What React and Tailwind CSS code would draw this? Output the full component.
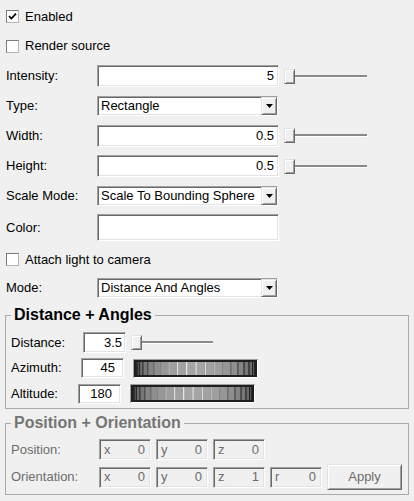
import React from 'react';

const sunken =
  'border border-t-[#a0a0a0] border-l-[#a0a0a0] border-r-white border-b-white shadow-[inset_1px_1px_0_#696969,inset_-1px_-1px_0_#e3e3e3]';
const raised =
  'border border-t-[#e3e3e3] border-l-[#e3e3e3] border-r-[#696969] border-b-[#696969] shadow-[inset_1px_1px_0_#ffffff,inset_-1px_-1px_0_#a0a0a0]';

const CheckBox = ({ checked }) => (
  <div className="w-[13px] h-[13px] border border-t-[#7a7a7a] border-l-[#7a7a7a] border-r-[#b5b5b5] border-b-[#b5b5b5] bg-white flex items-center justify-center shrink-0">
    {checked && (
      <svg width="9" height="9" viewBox="0 0 9 9">
        <path d="M1 4.2 L3.4 6.6 L8 1.6" stroke="#000" strokeWidth="1.7" fill="none" />
      </svg>
    )}
  </div>
);

const Slider = ({ line }) => (
  <div className="flex items-center">
    <div className={`w-[11px] h-[15px] bg-[#f0f0f0] ${raised}`} />
    <div className={`h-[3px] border-t-2 border-t-[#8a8a8a] border-b border-b-white ${line}`} />
  </div>
);

const Combo = ({ text }) => (
  <div className={`w-[181px] h-[20px] bg-white flex items-stretch ${sunken}`}>
    <span className="flex-1 pl-[3px] leading-[18px] whitespace-nowrap overflow-hidden">{text}</span>
    <div className={`w-[16px] bg-[#f0f0f0] flex items-center justify-center ${raised}`}>
      <svg width="7" height="4" viewBox="0 0 7 4">
        <polygon points="0,0 7,0 3.5,4" fill="#000" />
      </svg>
    </div>
  </div>
);

const Dial = () => {
  const W = 125;
  const H = 19;
  const n = 20;
  const xs = [];
  for (let i = 0; i <= n; i++) xs.push(3 + ((W - 6) * (1 - Math.cos((Math.PI * i) / n))) / 2);
  const g = (v) => {
    const c = Math.round(Math.max(0, Math.min(255, v)));
    return `rgb(${c},${c},${c})`;
  };
  return (
    <svg width={W} height={H} className="block shrink-0">
      <rect x="0" y="0" width={W} height={H} fill="#a0a0a0" />
      <rect x="1" y="1" width={W - 1} height={H - 1} fill="#ffffff" />
      <rect x="1" y="1" width={W - 2} height={H - 2} fill="#1e1e1e" />
      {xs.slice(0, n).map((x0, i) => {
        const x1 = xs[i + 1];
        const b = Math.sin((Math.PI * (i + 0.5)) / n);
        return (
          <g key={i}>
            <rect x={x0} y="3" width={x1 - x0} height={H - 6} fill={g(70 + 95 * b)} />
            <rect x={x0} y="3" width="1" height={H - 6} fill={g(30 + 225 * b * b * b * b)} />
          </g>
        );
      })}
    </svg>
  );
};

const Field = ({ axis, value }) => (
  <div className={`w-[52px] h-[21px] flex items-center justify-between pl-[4px] pr-[5px] text-[#6d6d6d] ${sunken}`}>
    <span>{axis}</span>
    <span>{value}</span>
  </div>
);

const Row = ({ h, label, children }) => (
  <div className={`flex items-center ${h}`}>
    <div className="w-[91px]">{label}</div>
    {children}
  </div>
);

const App = () => {
  return (
    <div
      className="w-[414px] h-[501px] bg-[#f0f0f0] overflow-hidden pl-[6px] pt-[2px] text-[13px] text-black"
      style={{ fontFamily: '"Liberation Sans", Arial, sans-serif' }}
    >
      <div className="flex items-center gap-[6px] h-[29px]">
        <CheckBox checked />
        <span>Enabled</span>
      </div>
      <div className="flex items-center gap-[6px] h-[30px]">
        <CheckBox />
        <span>Render source</span>
      </div>

      <Row h="h-[30px]" label="Intensity:">
        <div className={`w-[182px] h-[22px] bg-white flex items-center justify-end pr-[4px] mr-[5px] ${sunken}`}>5</div>
        <Slider line="w-[72px]" />
      </Row>
      <Row h="h-[29px]" label="Type:">
        <Combo text="Rectangle" />
      </Row>
      <Row h="h-[31px]" label="Width:">
        <div className={`w-[182px] h-[22px] bg-white flex items-center justify-end pr-[4px] mr-[5px] ${sunken}`}>0.5</div>
        <Slider line="w-[72px]" />
      </Row>
      <Row h="h-[30px]" label="Height:">
        <div className={`w-[182px] h-[22px] bg-white flex items-center justify-end pr-[4px] mr-[5px] ${sunken}`}>0.5</div>
        <Slider line="w-[72px]" />
      </Row>
      <Row h="h-[30px]" label="Scale Mode:">
        <Combo text="Scale To Bounding Sphere" />
      </Row>
      <Row h="h-[33px]" label="Color:">
        <div className={`w-[182px] h-[27px] bg-white ${sunken}`} />
      </Row>
      <div className="flex items-center gap-[6px] h-[31px]">
        <CheckBox />
        <span>Attach light to camera</span>
      </div>
      <Row h="h-[26px]" label="Mode:">
        <Combo text="Distance And Angles" />
      </Row>

      <fieldset className="-ml-[1px] mt-[6px] w-[404px] border border-[#a9a9a9] px-[5px] pt-[7px] pb-[2px]">
        <legend className="px-[3px] text-[16px] leading-[16px] font-bold">Distance + Angles</legend>
        <div className="flex items-center h-[25px]">
          <div className="w-[72px]">Distance:</div>
          <div className={`w-[43px] h-[21px] bg-white flex items-center justify-end pr-[3px] mr-[5px] ${sunken}`}>3.5</div>
          <Slider line="w-[71px]" />
        </div>
        <div className="flex items-center h-[26px]">
          <div className="w-[70px]">Azimuth:</div>
          <div className={`w-[43px] h-[20px] bg-white flex items-center justify-end pr-[8px] mr-[9px] ${sunken}`}>45</div>
          <Dial />
        </div>
        <div className="flex items-center h-[25px]">
          <div className="w-[67px]">Altitude:</div>
          <div className={`w-[43px] h-[20px] bg-white flex items-center justify-end pr-[8px] mr-[9px] ${sunken}`}>180</div>
          <Dial />
        </div>
      </fieldset>

      <fieldset className="-ml-[1px] mt-[6px] w-[404px] border border-[#a9a9a9] px-[5px] pt-[6px] pb-[2px] text-[#6d6d6d]">
        <legend className="px-[3px] text-[16px] leading-[16px] font-bold text-[#757575]">Position + Orientation</legend>
        <div className="flex items-center h-[25px]">
          <div className="w-[88px]">Position:</div>
          <div className="flex gap-[5px]">
            <Field axis="x" value="0" />
            <Field axis="y" value="0" />
            <Field axis="z" value="0" />
          </div>
        </div>
        <div className="flex items-center h-[30px]">
          <div className="w-[88px]">Orientation:</div>
          <div className="flex items-center gap-[5px]">
            <Field axis="x" value="0" />
            <Field axis="y" value="0" />
            <Field axis="z" value="1" />
            <Field axis="r" value="0" />
            <div className={`w-[75px] h-[26px] bg-[#f0f0f0] flex items-center justify-center text-[#6d6d6d] ${raised}`}>Apply</div>
          </div>
        </div>
      </fieldset>
    </div>
  );
};

export default App;
